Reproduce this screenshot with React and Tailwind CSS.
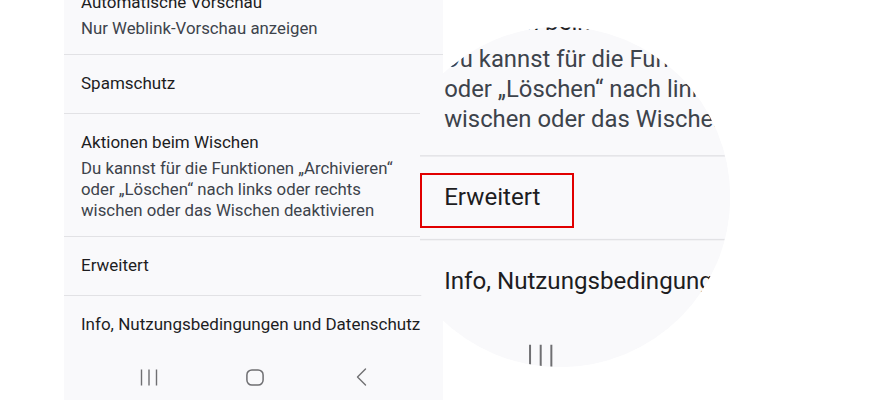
const items = [
  { title: 'Automatische Vorschau', desc: ['Nur Weblink-Vorschau anzeigen'] },
  { title: 'Spamschutz' },
  {
    title: 'Aktionen beim Wischen',
    desc: [
      'Du kannst für die Funktionen „Archivieren“',
      'oder „Löschen“ nach links oder rechts',
      'wischen oder das Wischen deaktivieren',
    ],
  },
  { title: 'Erweitert' },
  { title: 'Info, Nutzungsbedingungen und Datenschutz', last: true },
];

function NavBar() {
  return (
    <div className="flex items-center h-[46px] pl-[32px]">
      <div className="w-[106px] flex justify-center">
        <svg width="18" height="17" viewBox="0 0 18 17" fill="none" stroke="#6f6f72" strokeWidth="1.4">
          <path d="M1.5 0.5v16M9 0.5v16M16.5 0.5v16" />
        </svg>
      </div>
      <div className="w-[106px] flex justify-center">
        <svg width="18" height="17" viewBox="0 0 18 17" fill="none" stroke="#6f6f72" strokeWidth="1.5">
          <rect x="0.9" y="0.9" width="16.2" height="15.2" rx="5" />
        </svg>
      </div>
      <div className="w-[106px] flex justify-center">
        <svg width="11" height="18" viewBox="0 0 11 18" fill="none" stroke="#6f6f72" strokeWidth="1.4" strokeLinecap="round" strokeLinejoin="round">
          <path d="M9.5 1L1.5 9l8 8" />
        </svg>
      </div>
    </div>
  );
}

function Phone() {
  return (
    <div className="w-[379px] h-[400px] overflow-hidden bg-[#f9f9fb] font-['Roboto',sans-serif]">
      <div className="-mt-[26px]">
        {items.map(it => (
          <div
            key={it.title}
            className={`px-[17px] pt-[17px] ${it.desc ? 'pb-[15px]' : 'pb-[19px]'} ${it.last ? '' : 'border-b border-[#e2e2e5]'}`}
          >
            <p className="text-[17px] leading-[22px] text-[#1d1d1f] whitespace-nowrap">{it.title}</p>
            {it.desc && (
              <div className="mt-[5px] text-[16.8px] leading-[21px] text-[#3d434b] whitespace-nowrap">
                {it.desc.map(line => <p key={line}>{line}</p>)}
              </div>
            )}
          </div>
        ))}
        <NavBar />
      </div>
    </div>
  );
}

export default function App() {
  return (
    <div className="relative w-[879px] h-[400px] bg-white overflow-hidden">
      <div className="ml-[64px]">
        <Phone />
      </div>

      {/* magnifier */}
      <div className="absolute left-[420px] top-[27px] w-[310px] h-[340px] overflow-hidden">
        <div className="absolute -left-[30px] top-0 w-[340px] h-[340px] rounded-full overflow-hidden bg-[#f9f9fb]">
          <div className="absolute left-[30px] top-[-206.7px] origin-top-left scale-[1.42]">
            <Phone />
          </div>
        </div>
      </div>

      <div className="absolute left-[420px] top-[173px] w-[154px] h-[55px] border-2 border-[#e10000]" />
    </div>
  );
}
